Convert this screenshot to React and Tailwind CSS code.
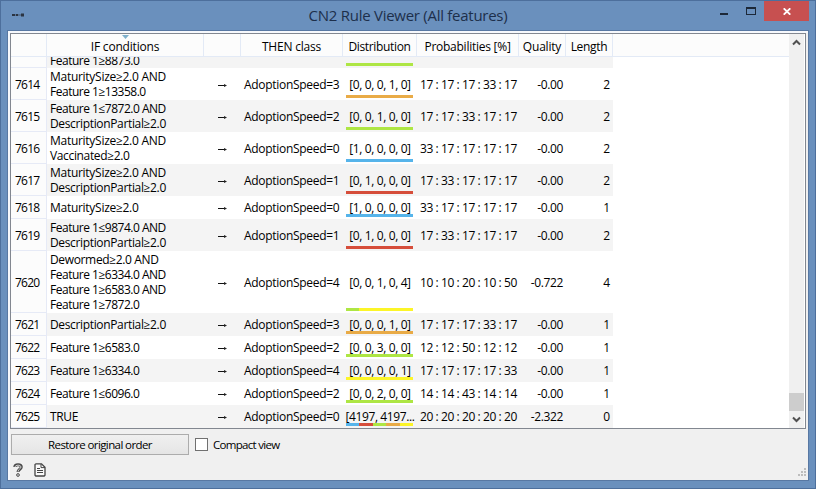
import React from "react";

const BLUE = "bg-[#56b4ea]";
const RED = "bg-[#d64e3b]";
const GREEN = "bg-[#aee644]";
const ORANGE = "bg-[#e9ab47]";
const YELLOW = "bg-[#fcf528]";

const TALL = "h-8";
const SHORT = "h-[23px]";

const ROWS = [
  { id: 7614, h: TALL, cond: ["MaturitySize≥2.0 AND", "Feature 1≥13358.0"], cls: 3, dist: "[0, 0, 0, 1, 0]", bar: [[ORANGE, 1]], prob: "17 : 17 : 17 : 33 : 17", q: "-0.00", len: 2 },
  { id: 7615, h: TALL, cond: ["Feature 1≤7872.0 AND", "DescriptionPartial≥2.0"], cls: 2, dist: "[0, 0, 1, 0, 0]", bar: [[GREEN, 1]], prob: "17 : 17 : 33 : 17 : 17", q: "-0.00", len: 2 },
  { id: 7616, h: TALL, cond: ["MaturitySize≥2.0 AND", "Vaccinated≥2.0"], cls: 0, dist: "[1, 0, 0, 0, 0]", bar: [[BLUE, 1]], prob: "33 : 17 : 17 : 17 : 17", q: "-0.00", len: 2 },
  { id: 7617, h: TALL, cond: ["MaturitySize≥2.0 AND", "DescriptionPartial≥2.0"], cls: 1, dist: "[0, 1, 0, 0, 0]", bar: [[RED, 1]], prob: "17 : 33 : 17 : 17 : 17", q: "-0.00", len: 2 },
  { id: 7618, h: SHORT, cond: ["MaturitySize≥2.0"], cls: 0, dist: "[1, 0, 0, 0, 0]", bar: [[BLUE, 1]], prob: "33 : 17 : 17 : 17 : 17", q: "-0.00", len: 1 },
  { id: 7619, h: TALL, cond: ["Feature 1≤9874.0 AND", "DescriptionPartial≥2.0"], cls: 1, dist: "[0, 1, 0, 0, 0]", bar: [[RED, 1]], prob: "17 : 33 : 17 : 17 : 17", q: "-0.00", len: 2 },
  { id: 7620, h: "h-[62px]", cond: ["Dewormed≥2.0 AND", "Feature 1≥6334.0 AND", "Feature 1≥6583.0 AND", "Feature 1≥7872.0"], cls: 4, dist: "[0, 0, 1, 0, 4]", bar: [[GREEN, 1], [YELLOW, 4]], prob: "10 : 10 : 20 : 10 : 50", q: "-0.722", len: 4 },
  { id: 7621, h: SHORT, cond: ["DescriptionPartial≥2.0"], cls: 3, dist: "[0, 0, 0, 1, 0]", bar: [[ORANGE, 1]], prob: "17 : 17 : 17 : 33 : 17", q: "-0.00", len: 1 },
  { id: 7622, h: SHORT, cond: ["Feature 1≥6583.0"], cls: 2, dist: "[0, 0, 3, 0, 0]", bar: [[GREEN, 1]], prob: "12 : 12 : 50 : 12 : 12", q: "-0.00", len: 1 },
  { id: 7623, h: SHORT, cond: ["Feature 1≥6334.0"], cls: 4, dist: "[0, 0, 0, 0, 1]", bar: [[YELLOW, 1]], prob: "17 : 17 : 17 : 17 : 33", q: "-0.00", len: 1 },
  { id: 7624, h: SHORT, cond: ["Feature 1≤6096.0"], cls: 2, dist: "[0, 0, 2, 0, 0]", bar: [[GREEN, 1]], prob: "14 : 14 : 43 : 14 : 14", q: "-0.00", len: 1 },
  { id: 7625, h: SHORT, cond: ["TRUE"], cls: 0, dist: "[4197, 4197...", bar: [[BLUE, 1], [RED, 1], [GREEN, 1], [ORANGE, 1], [YELLOW, 1]], prob: "20 : 20 : 20 : 20 : 20", q: "-2.322", len: 0 },
];

const GRID = "grid grid-cols-[36px_157px_37px_102px_74px_102px_47px_47px]";

function condTracking(text) {
  if (text.startsWith("Feature")) return "tracking-[-0.49px]";
  if (text.startsWith("Maturity")) return "tracking-[-0.28px]";
  return "tracking-[-0.35px]";
}

function Bar({ parts }) {
  return (
    <div className="absolute bottom-[2px] left-[3px] flex h-[3px] w-[67px]">
      {parts.map(([color, n], i) => (
        <div key={i} className={color} style={{ flexGrow: n }} />
      ))}
    </div>
  );
}

function Row({ row, shaded }) {
  return (
    <div className={`${GRID} ${row.h} w-[602px] shrink-0 items-center ${shaded ? "bg-[#f4f4f4]" : "bg-white"}`}>
      <div className="flex h-full items-center border-r border-b border-[#e6eaf6] bg-[#fcfcfc] pt-px pl-[4px] tracking-[-0.75px]">{row.id}</div>
      <div className="pl-[3px]">
        {row.cond.map((c) => (
          <div key={c} className={condTracking(c)}>{c}</div>
        ))}
      </div>
      <div className="flex justify-center">
        <Arrow />
      </div>
      <div className="pl-[3px] tracking-[-0.3px]">AdoptionSpeed={row.cls}</div>
      <div className="relative flex h-full items-center justify-center tracking-[-0.38px]">
        <Bar parts={row.bar} />
        <span className="relative">{row.dist}</span>
      </div>
      <div className="pl-[3px] tracking-[-0.42px]">{row.prob}</div>
      <div className="pr-[3px] text-right tracking-[-0.35px]">{row.q}</div>
      <div className="pr-[3px] text-right">{row.len}</div>
    </div>
  );
}

function Arrow() {
  return (
    <svg width="9" height="5" viewBox="0 0 9 5" className="mt-[2px]">
      <path d="M0 2.5H8" stroke="#111" strokeWidth="1" />
      <path d="M6 1L9 2.5L6 4Z" fill="#222" />
    </svg>
  );
}

function HeadCell({ children }) {
  return <div className="relative flex h-full items-center justify-center border-r border-[#e3eaf6] pt-[2px]">{children}</div>;
}

function TitleBar() {
  return (
    <div className="flex h-[30px] shrink-0">
      <div className="flex w-[150px] pt-[12px] pl-[11px]">
        <svg width="13" height="4" viewBox="0 0 13 4">
          <path d="M0 2H12" stroke="#45566d" strokeWidth="1" />
          <path d="M0 1H3V3H0ZM4 1H6V3H4ZM9 0.5H12V3.5H9Z" fill="#2b3442" />
        </svg>
      </div>
      <div className="flex-1 pt-[4px] text-center text-[15px] leading-[20px] whitespace-nowrap text-[#1d2f4b]">
        <span className="tracking-[-0.27px]">CN2 Rule Viewer (All features)</span>
      </div>
      <div className="flex w-[150px] justify-end pr-[6px]">
        <svg width="44" height="20" viewBox="0 0 44 20">
          <path d="M0 12H8V14H0Z" fill="#1c2838" />
          <path d="M26 6H36V14H26ZM27 8V13H35V8Z" fillRule="evenodd" fill="#1c2838" />
        </svg>
        <div className="flex h-5 w-[45px] items-center justify-center bg-[#c75050]">
          <svg width="8" height="7" viewBox="0 0 8 7">
            <path d="M0.7 0.3L7.3 6.7M7.3 0.3L0.7 6.7" stroke="#fff" strokeWidth="1.8" />
          </svg>
        </div>
      </div>
    </div>
  );
}

function ScrollBar() {
  return (
    <div className="mr-px flex w-[15px] flex-col items-center bg-[#f0f0f0]">
      <svg width="9" height="7" viewBox="0 0 9 7" className="mt-[5px]">
        <path d="M1 5.5L4.5 2L8 5.5" fill="none" stroke="#505050" strokeWidth="2" />
      </svg>
      <div className="flex-1" />
      <div className="h-[18px] w-full bg-[#cdcdcd]" />
      <svg width="9" height="7" viewBox="0 0 9 7" className="mt-[5px] mb-[5px]">
        <path d="M1 1.5L4.5 5L8 1.5" fill="none" stroke="#505050" strokeWidth="2" />
      </svg>
    </div>
  );
}

function Table() {
  return (
    <div className="flex h-[396px] w-[796px] border border-[#828790] bg-white text-[12px] leading-[15px] whitespace-pre text-black">
      <div className="flex flex-1 flex-col overflow-hidden">
        <div className="h-[23px] shrink-0 border-b border-[#e3eaf6] bg-[#fcfcfc]">
          <div className={`${GRID} h-full w-[602px]`}>
            <HeadCell />
            <HeadCell>
              <svg width="7" height="4" viewBox="0 0 7 4" className="absolute top-[1px] left-[75px]">
                <path d="M0 0H7L3.5 4Z" fill="#7fb0cc" />
              </svg>
              <span className="tracking-[-0.2px]">IF conditions</span>
            </HeadCell>
            <HeadCell />
            <HeadCell><span className="tracking-[-0.2px]">THEN class</span></HeadCell>
            <HeadCell><span className="tracking-[-0.35px]">Distribution</span></HeadCell>
            <HeadCell><span className="tracking-[-0.25px]">Probabilities [%]</span></HeadCell>
            <HeadCell><span className="tracking-[-0.2px]">Quality</span></HeadCell>
            <HeadCell><span className="tracking-[-0.3px]">Length</span></HeadCell>
          </div>
        </div>
        <div className="flex h-[11px] w-[602px] shrink-0 items-end overflow-hidden bg-[#f4f4f4]">
          <div className="h-full w-9 border-r border-b border-[#e6eaf6] bg-[#fcfcfc]" />
          <div className="w-[296px] pl-[3px] tracking-[-0.49px]">Feature 1≥8873.0</div>
          <div className="relative h-full w-[74px]">
            <Bar parts={[[GREEN, 1]]} />
          </div>
        </div>
        {ROWS.map((r, i) => (
          <Row key={r.id} row={r} shaded={i % 2 === 1} />
        ))}
      </div>
      <ScrollBar />
    </div>
  );
}

function Footer() {
  return (
    <>
      <div className="mt-[5px] flex h-[21px] items-center pl-px text-[11.5px] leading-[15px] text-black">
        <button className="h-[21px] w-[178px] border border-[#acacac] bg-linear-to-b from-[#f0f0f0] to-[#e5e5e5] tracking-[-0.6px]">Restore original order</button>
        <span className="ml-[6px] h-[13px] w-[13px] border border-[#707070] bg-white" />
        <span className="ml-[5px] tracking-[-0.7px]">Compact view</span>
      </div>
      <div className="flex items-start pt-[8px] pl-[3px]">
        <svg width="10" height="14" viewBox="0 0 10 14">
          <path d="M1.8 4C1.8 0.9 8.3 0.9 8.3 4C8.3 6.3 5 6.2 5 9" fill="none" stroke="#484848" strokeWidth="3" />
          <path d="M2 4C2.3 1.6 7.9 1.6 8 4C8 6 5 6 5 8.7" fill="none" stroke="#e4e4e4" strokeWidth="0.9" />
          <circle cx="5" cy="12" r="1.4" fill="#d0d0d0" stroke="#484848" strokeWidth="0.9" />
        </svg>
        <svg width="12" height="14" viewBox="0 0 12 14" className="ml-[11px]">
          <path d="M2 0.8H7.5L11 4.3V12.2L10.2 13H1.8L1 12.2V1.6Z" fill="#fafafa" stroke="#444" strokeWidth="1.3" />
          <path d="M7 1V4.6H11" fill="none" stroke="#444" strokeWidth="1" />
          <path d="M3 5.5H6M3 7.5H9M3 9.5H9" stroke="#444" strokeWidth="1" />
        </svg>
        <svg width="8" height="8" viewBox="0 0 8 8" className="mt-[5px] ml-auto mr-[2px]">
          <path d="M6 0H8V2H6ZM3 3H5V5H3ZM6 3H8V5H6ZM0 6H2V8H0ZM3 6H5V8H3ZM6 6H8V8H6Z" fill="#bdbdbd" />
        </svg>
      </div>
    </>
  );
}

export default function App() {
  return (
    <div className="flex h-[489px] w-[816px] flex-col overflow-hidden border border-[#4d6f9c] bg-[#6a90bd] font-['Open_Sans','Noto_Sans',sans-serif]">
      <TitleBar />
      <div className="mx-[6px] -mt-px h-[451px] border border-[#5878a3] bg-[#f0f0f0]">
        <div className="flex h-full flex-col border-t-2 border-l-2 border-[#f6f8fc]">
          <Table />
          <Footer />
        </div>
      </div>
    </div>
  );
}
